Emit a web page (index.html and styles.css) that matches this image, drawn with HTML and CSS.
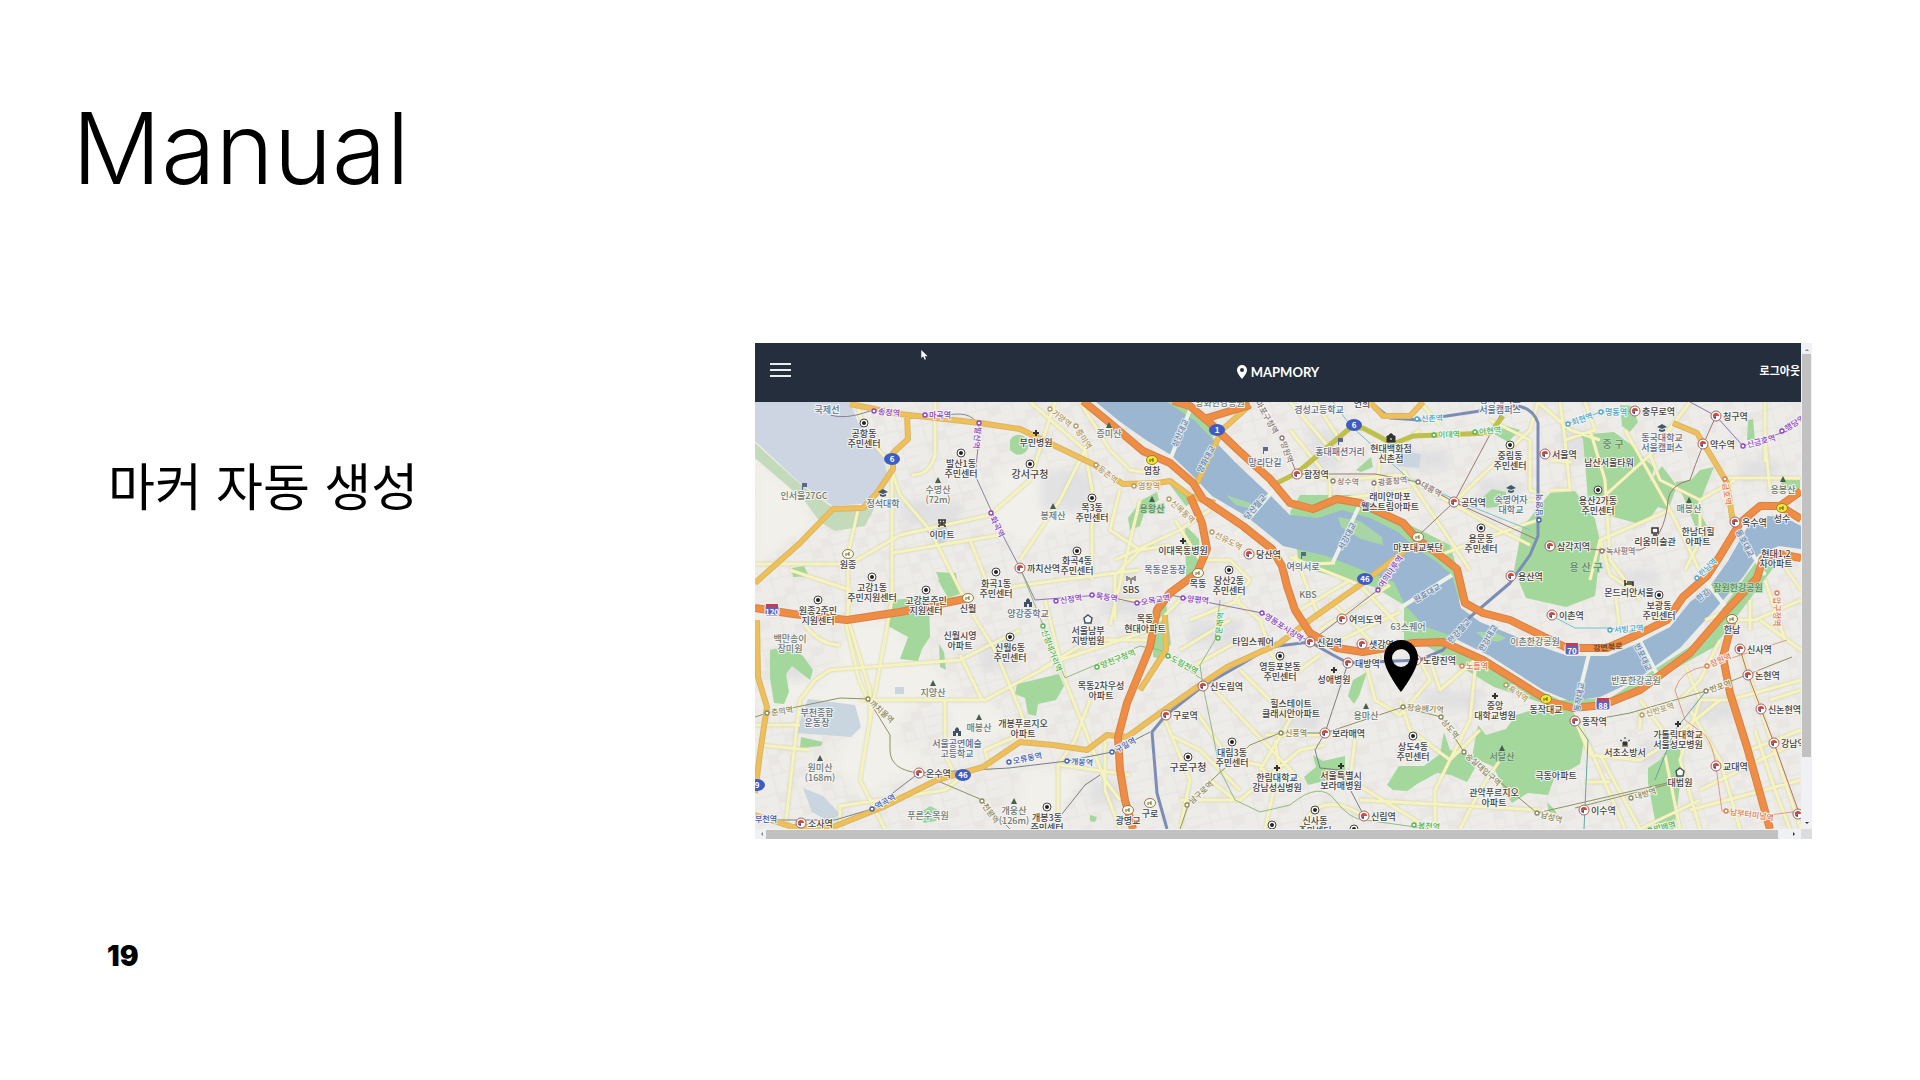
FILE: index.html
```html
<!DOCTYPE html>
<html lang="ko">
<head>
<meta charset="utf-8">
<meta name="viewport" content="width=device-width, initial-scale=1">
<title>Manual</title>
<link rel="stylesheet" href="styles.css">
</head>
<body>
<main class="slide">
  <h1 class="title">Manual</h1>
  <section class="content">
    <p class="caption">마커 자동 생성</p>
    <div class="viewer">
      <header class="topbar">
        <button class="menu" type="button" aria-label="메뉴"><span></span><span></span><span></span></button>
        <a class="brand" href="#"><svg class="brand-pin" viewBox="0 0 10 14" aria-hidden="true"><path fill-rule="evenodd" d="M5 0a5 5 0 0 0-5 5c0 3.500 5 9 5 9s5-5.500 5-9a5 5 0 0 0-5-5zm0 3a2 2 0 1 1 0 4 2 2 0 0 1 0-4z"/></svg>MAPMORY</a>
        <button class="logout" type="button">로그아웃</button>
        <svg class="cursor" viewBox="0 0 8 11" aria-hidden="true"><path d="M1 0v9l2-2 2 4 1-1-1-3h3z"/></svg>
      </header>
      <svg class="map" id="map" viewBox="755 402 1046 427" role="img" aria-label="지도">
        <defs>
          <pattern id="streets" width="46" height="38" patternUnits="userSpaceOnUse" patternTransform="rotate(-14)">
            <path class="street" d="M0 8h46M0 27h46M10 0v38M31 0v38M20 8v19M31 18h15"/>
            <path class="block" d="M11 9h8v9h-8zM32 28h12v8H32zM21 0h9v7h-9z"/>
          </pattern>
          <filter id="soft"><feGaussianBlur stdDeviation="4"/></filter>
          <path id="gold-roads" d="M850 404 900 414 980 423 1020 429 1093 464 1123 484 1157 483 1170 481 1190 496 1215 503M907 414 908 439 893 453V469L877 493 863 508 833 509 800 543 755 583M757 620 758 677 767 707 760 753 755 793M755 815 793 827 833 827 883 807 937 780 983 767 1020 742 1053 745 1087 750 1107 735 1127 737 1160 713 1203 683 1227 667 1280 643 1310 620 1367 580 1412 545M1370 402 1383 416H1410L1423 402M1250 405 1222 430 1197 483M1673 423 1697 433 1713 459 1727 483 1733 523M1165 615 1166 650 1140 690"/>
          <path id="highways" d="M1083 401 1110 423 1143 451 1170 463 1193 483 1203 499 1243 526 1272 549 1282 566 1287 586 1295 610 1310 633 1337 648 1363 652 1413 643 1443 642 1483 660 1520 683 1550 702 1573 708 1603 705 1640 690 1690 653 1727 610 1757 578 1763 559 1780 554 1801 558M1173 401 1190 406 1210 423 1237 449 1270 479 1290 503 1313 509 1337 499 1360 503 1403 523 1417 539 1437 553 1457 569 1465 603 1483 613 1510 620 1567 648 1607 648 1637 635 1667 620 1683 597 1707 576 1720 556 1740 523 1760 506 1780 506 1801 519M1780 506 1801 491M1204 419 1250 405M1190 496 1202 523 1207 549 1197 573 1170 593 1157 610 1150 647 1127 703 1118 737 1120 770 1125 800 1133 829M755 608 793 614 847 620 900 612 965 599M1732 622 1723 657 1730 693 1747 747 1770 829"/>
          <symbol id="i-dot" viewBox="-6 -6 12 12"><circle r="4" fill="#fff" stroke="#444"/><circle r="2" fill="#222"/></symbol>
          <symbol id="i-tri" viewBox="-6 -6 12 12"><path d="M0-3 3 3h-6z" fill="#44604d"/></symbol>
          <symbol id="i-cross" viewBox="-6 -6 12 12"><path d="M-3 0h6M0-3v6" stroke="#333" stroke-width="2"/></symbol>
          <symbol id="i-stop" viewBox="-6 -6 12 12"><circle r="2" fill="#fff" stroke="currentColor" stroke-width="1.300"/></symbol>
          <symbol id="i-rail" viewBox="-6 -6 12 12"><circle r="5" fill="#fff" stroke="#a6625f"/><path d="M-3 1a3 3 0 0 1 3-4v3z" fill="#cb4a38"/><path d="M-3 1a3 3 0 0 0 3 2v-3z" fill="#3c4fa0"/><path d="M0-3a3 3 0 0 1 3 3l-3 0z" fill="#cb4a38"/></symbol>
          <symbol id="i-ic" viewBox="-6 -6 12 12"><ellipse rx="5.500" ry="4.500" fill="#fffde8" stroke="#877b55"/><path d="M-2-1v3M2-1H0v2h2" stroke="#6a623d" fill="none"/></symbol>
          <symbol id="i-icy" viewBox="-6 -6 12 12"><ellipse rx="5.500" ry="4.500" fill="#f4e738" stroke="#91882c"/><path d="M-2-1v3M2-1H0v2h2" stroke="#5c581d" fill="none"/></symbol>
          <symbol id="i-cap" viewBox="-6 -6 12 12"><path d="M-5-1 0-4l5 3-5 2zM-3 1l3 1 3-1v2l-3 1-3-1z" fill="#405a6b"/></symbol>
          <symbol id="i-flag" viewBox="-6 -6 12 12"><path d="M-2-3h5v4h-4v3h-1z" fill="#5b6791"/></symbol>
          <symbol id="i-house" viewBox="-6 -6 12 12"><path d="M-4 4v-5h2v-2l2-2 2 2v2h2v5H1V1h-2v3z" fill="#3f5265"/></symbol>
          <symbol id="i-shop" viewBox="-6 -6 12 12"><path d="M-4-3h8M-3-3v3h6v-3M-3 2h6M-3 4v-2M3 4v-2M0-3v5" fill="none" stroke="#3c3431" stroke-width="1.500"/></symbol>
          <symbol id="i-bag" viewBox="-6 -6 12 12"><path d="M-4-2h8v6h-8zM-2-2c0-3 4-3 4 0" fill="#333" stroke="#333"/><path d="M-1 1h2" stroke="#fff"/></symbol>
          <symbol id="i-pent" viewBox="-6 -6 12 12"><path d="M0-4 4-1 3 4h-6l-1-5z" fill="#fff" stroke="#465364" stroke-width="1.500"/></symbol>
          <symbol id="i-mast" viewBox="-6 -6 12 12"><path d="M0-2v6M-2-3v3M2-3v3M-4-4v5M4-4v5" stroke="#333"/></symbol>
          <symbol id="i-museum" viewBox="-6 -6 12 12"><path d="M-3-3h6v5h-6zM-2 4h4" fill="#fff" stroke="#333" stroke-width="1.500"/></symbol>
          <symbol id="i-bed" viewBox="-6 -6 12 12"><path d="M-4-3v6M-4 1h8v2M-2-1h6v2" stroke="#333" stroke-width="1.500" fill="none"/></symbol>
          <symbol id="i-fire" viewBox="-6 -6 12 12"><path d="M-3 4h6M-2 3v-3h4v3zM0-5v2M-5-2l2 1M5-2l-2 1" stroke="#333" fill="#333"/></symbol>
        </defs>
        <rect class="land" x="755" y="402" width="1046" height="427"/>
        <rect x="755" y="402" width="1046" height="427" fill="url(#streets)"/>
        <path class="meadow" filter="url(#soft)" d="M755 688 770 700 790 680 815 688 840 660 850 620 890 625 925 660 960 690 915 700 890 740 935 760 900 775 860 800 850 780 830 765 860 720 810 700 760 705zM1000 470l60-5 10 60-50 20-30-30zM755 458l50 46 10 20-60 40zM1020 770l60 0-20 40-40 15zM940 700h50l20 30-50 20z"/>
        <g class="haze" filter="url(#soft)">
          <path d="M900 500h60v25h-60zM1040 470h50v40h-50zM1100 590h40v25h-40zM1190 620h50v25h-50zM1090 780h30v25h-30zM1280 700h40v30h-40zM1390 450h60v20h-60zM1480 480h40v30h-40zM1560 430h30v30h-30zM1740 460h40v20h-40zM1640 740h30v25h-30zM1690 700h50v20h-50zM1420 690h60v20h-60zM980 640h40v30h-40zM770 650h30v30h-30zM1310 430h30v40h-30zM1620 570h40v16h-40z"/>
        </g>
        <path class="pale" d="M855 705l6 22-10 10-55-4 12-34zM803 788l20 8 17 18-10 8-18-10zM925 530l20-5 6 12-10 8zM1395 450l26 4-2 14-22-2zM895 687h9v7h-9z"/>
        <path class="airfield" d="M755 402H850L858 423 880 446 888 476 870 503 833 506 800 483 755 441z"/>
        <path class="lawn" d="M755 443 800 484 833 508 876 505 865 526 835 531 820 522 804 500 755 458z"/>
        <g class="park">
          <path d="M770 650l18-4 15 10 10 14-3 10-18-14-6 8 3 18-5 12-10-1-4-25zM891 600l38-3 1 40-8 12-4 12-18-2 8-22-20-11zM938 580l18-2 4 16-12 4zM801 737l22 5-2 4-21 2zM939 644l5 8 2 18-6-3zM918 814l12-8 10 5-4 10-12 2zM1010 440a10 10 0 1 1 5 14l-5-4zM1142 500l15-8 2 8-14 10-5 16-10 4-2-12zM1170 485l14 3 12 12-10 6zM1185 525l14 14 2 30-15 10zM1017 684l42-10 5 12-8 14-18 4-2 12-8-2-3-16-10-4zM1155 600l10-6 6 50-10 15-8-2zM1090 815l7 2-2 5-5-1zM1353 680l14-8-8 24-5 8-6-8z"/>
          <path d="M936 572l20 1 2 14-15 2zM792 568l12-2 5 10-16 1zM1356 470l15-13 2 10-12 5zM1313 755l10 6 22-5 0 20-37 9-4-8 12-10zM1387 785l12-19 25 0 16-12 4-22 6 18 25 7 0 11-8 14-16-7-14-2-20 11-10 7-14-1zM1478 725l8 10 20-6 10-14 30-9 26 4 13 24-5 30-26 15-6 16-20-2-16 10-8-12-10-24-22-10z"/>
          <path d="M1580 435l34-3 16 12 24 24-4 14 12-16 15 20-9 24-10-3-6 8-12 9-30-8-9-20-13 3-5-60zM1550 493l25-2 20 28 6 27-6 50-29 11-40-9-12-28 8-42zM1620 405l12 1 6 16-8 10-8-6zM1748 420l5-1 2 22-8-1zM1700 470l14-3-9 22-7 20 13 25-8 12-20-50-8-14 16-2zM1783 480l17 0 0 8-25 6zM1670 745l10 5 2 20-8 60-18-5-8-42 0-15 12-8zM1547 802l8 8 2 4-8-2zM1480 500l12-11 14 3 0 14-20 2zM1494 434l12-8 14 4-12 12z"/>
        </g>
        <path class="park" d="M1135 402h55l20 24 4 14-30-18zM1300 495h50l100 50 12 40-10 60-48 0 0-40-30-18-74-20-10-55zM1400 630l40-2 30 30 90 42 50-2 90-58 68-95 6 22-60 80-100 56-60 4-60-20z"/>
        <path class="river" d="M1096 402H1167L1195 421 1237 464 1272 497 1290 515 1318 518 1342 510 1370 518 1398 532 1417 549 1437 562 1452 575 1461 608 1480 622 1545 648 1568 656 1608 656 1639 643 1670 627 1690 602 1708 589 1728 561 1748 526 1768 516 1784 517 1801 526V549L1779 546 1759 554 1743 577 1717 607 1680 648 1636 680 1600 697 1570 701 1543 690 1490 656 1446 634 1424 626 1405 605 1394 582 1362 570 1327 556 1283 546 1246 516 1212 496 1194 477 1171 455 1146 440 1119 421z"/>
        <path class="island" d="M1226 495l24 8 10 8-24-6zM1338 517l22 4 22 16 1 8-22-6-20-12zM1476 632l18 0 12 6-8 4-14-3z"/>
        <g class="minor">
          <path d="M858 402q2 30 30 58L900 495 930 530 950 570 970 610 995 650 1020 710 1030 740M892 460V600L870 720 860 780 885 829M755 564H850L900 535 990 515 1030 480 1055 402M848 554V620L870 690V720M848 554 858 510M892 553 1000 535M790 570 850 590 847 620M935 402V455Q930 475 912 475M970 540 990 590 1060 580 1140 570M755 725h45M760 745l50 5M785 829 800 700 815 680 830 670 960 660 1020 630M860 700h125L1060 660 1150 630 1180 600M960 655l22 45M945 700v55l10 20M840 829V806L945 790 970 770M990 770 985 750 1020 735M845 620l14 60 9 20M805 625q15 20 35 20M1030 402 1085 450 1092 490V580M1090 440 1060 500 1020 560M1080 402 1110 450 1130 470 1160 475M1120 489 1110 530 1140 550 1170 545M1140 550 1115 575V620M1110 625 1140 500M1120 600H1160M1045 600 1065 680 1105 780 1120 800M1058 829V765L1075 740 1090 700M1040 670 1090 640 1150 640M1115 560 1180 530 1210 510M1175 520 1200 560 1230 560 1250 580 1235 600 1260 620 1270 650"/>
          <path d="M1105 740v50l15 39M1060 765 1130 775M1165 720 1190 780 1180 829M1170 735 1200 750 1240 790M1195 710 1230 760 1260 765 1275 785 1265 829M1215 690 1300 780M1240 670 1290 720 1260 770M1180 800 1240 800 1300 750 1325 745M1265 735h70M1260 640 1280 665 1300 670 1320 655M1275 740 1280 775M1210 780 1235 800M1240 600 1190 620M1240 640 1195 665M1180 650 1230 620M1290 557 1360 585 1403 630M1290 565 1335 563M1300 610 1350 580M1320 630 1390 585M1330 600 1370 640 1380 660M1295 555 1320 620M1340 640 1400 612M1290 402 1340 460M1315 402 1340 440M1290 430 1330 480V500L1410 490M1375 500 1380 460 1420 430M1300 475 1340 480 1400 475 1450 502 1490 525 1530 545M1403 470 1470 570M1454 502 1530 430 1538 402M1420 402 1440 425M1440 555 1480 540 1538 520M1490 420 1530 440 1530 490 1545 495M1500 500h40M1538 402 1570 430 1600 440M1560 402 1565 440 1595 430 1585 402M1550 490l20 0-5-50M1590 430 1605 480 1610 560 1640 600M1550 460l22 2M1600 500 1650 455 1690 402M1625 430 1670 510 1685 540 1700 572M1670 510 1600 540 1590 580M1600 540l10 35 30 20M1650 455 1660 480 1700 500 1735 480M1700 500v40l-15 30"/>
          <path d="M1725 478h75M1765 402v60M1770 490 1765 440M1365 660 1375 700 1400 715 1430 680 1420 660M1400 700 1410 730 1450 760 1480 730M1430 660 1440 690 1475 660M1355 740 1350 780 1430 829M1360 800 1540 810M1435 829 1435 790 1470 720 1475 670M1460 829 1480 790 1500 760M1300 829q20-40 60-15M1575 720 1590 755 1640 760 1690 730M1580 725 1625 829M1600 755 1640 829M1585 782h25M1685 665 1700 700 1680 760 1700 829M1720 640 1700 680 1680 700M1640 700 1670 740 1720 700M1700 700 1730 700 1801 680M1735 620h20l46-20M1750 600v30M1760 620 1801 650M1690 710 1720 760 1740 829M1700 790 1801 740M1690 810 1801 780M1755 730l20 60 15 39M1740 649 1801 829M1770 700l31-10M1750 750l51-20M1665 755 1680 829M1640 829 1700 800M1640 710v20M1780 560 1801 590M1620 630l-5-40M1705 620 1730 610M1765 580l20 60"/>
        </g>
        <g class="rails">
          <path stroke="#8b829d" d="M830 415q15 5 40-4M948 415Q975 410 980 430L975 475 1000 530 1020 568 1035 600"/>
          <path stroke="#92ba87" d="M1020 568 1045 630 1065 678 1140 646 1160 650 1203 680M1203 686 1210 720 1220 770 1235 800 1260 812 1290 805Q1320 780 1335 800 1350 820 1365 820L1430 829M1203 686 1200 665 1215 640 1220 600"/>
          <path stroke="#8c75b0" d="M1035 600 1100 595 1137 603 1170 595 1262 613 1310 642 1378 590 1395 565M1690 402 1716 416 1743 446 1790 430"/>
          <path stroke="#9b7975" d="M1297 474H1375L1418 482 1454 502 1538 540M1417 537 1454 502 1503 410M1282 438 1297 474M1545 546 1602 550H1640Q1665 540 1668 500 1670 485 1690 480 1700 450 1716 416"/>
          <path stroke="#75c2cf" d="M1333 402 1350 425 1410 480 1480 510 1530 530M1567 424 1601 412 1635 411M1550 615 1575 628H1610L1640 635"/>
          <path stroke="#8f9262" d="M755 717 767 713 840 698 868 699 890 735V750Q890 770 919 773L980 799 1010 829M1180 829 1190 800 1250 745 1280 733H1325L1403 707 1441 717 1464 752 1537 813 1680 780M1575 723 1630 713 1706 691 1792 657M1575 808 1685 780"/>
          <path stroke="#df9b88" d="M1675 690q5-20 32-24l80-26M1675 690l10 30 20 15q8 10 11 31l6 45 40 5 38-5"/>
          <path stroke="#b4706b" d="M1740 649 1748 675 1774 743 1798 810"/>
          <path stroke="#67a4a0" d="M1575 721 1588 740 1584 829M1706 691 1675 730 1655 780"/>
          <path stroke="#7a7f86" d="M759 820H835L872 809 919 773 1009 768 1067 761 1112 752 1150 732M1325 733 1348 663M1325 733 1315 750 1320 768 1340 770 1364 816M1050 829 1085 785 1100 775"/>
        </g>
        <path class="trunk-rail" d="M1167 829 1157 793 1152 732 1166 715 1203 686 1240 665 1270 647 1310 642 1333 655 1348 663 1420 660 1443 650 1470 617 1510 583 1530 555 1538 536V423Q1530 400 1500 408L1420 420 1390 418 1370 402"/>
        <use class="casing" href="#gold-roads"/>
        <use class="gold" href="#gold-roads"/>
        <path class="olive" d="M1277 483 1297 473 1350 428 1363 428 1393 444 1413 436 1490 433 1503 416"/>
        <path class="bridge" d="M1190 410 1166 470M1277 486 1235 535M1362 500 1333 562M1452 575 1400 608M1498 618 1478 655M1590 650 1575 710M1637 635 1660 680M1705 580 1725 606M1735 525 1765 575"/>
        <use class="highway-edge" href="#highways"/>
        <use class="highway" href="#highways"/>
        <g id="labels"></g>
        <path class="marker" fill-rule="evenodd" d="M1401 640c-10 0-17 8-17 18 0 12 17 34 17 34s17-22 17-34c0-10-7-18-17-18zm0 9a9 9 0 1 1 0 18 9 9 0 0 1 0-18z"/>
      </svg>
      <div class="scroll scroll-y" aria-hidden="true"><span class="arrow up"></span><span class="thumb"></span><span class="arrow down"></span></div>
      <div class="scroll scroll-x" aria-hidden="true"><span class="arrow left"></span><span class="thumb"></span><span class="arrow right"></span></div>
      <div class="corner"></div>
    </div>
  </section>
  <footer class="page-number">19</footer>
</main>
<script src="map.js"></script>
</body>
</html>
```
FILE: styles.css
```css
* { box-sizing: border-box; }
body {
  margin: 0;
  background: #fff;
  color: #000;
  font-family: "Noto Sans CJK KR", sans-serif;
}
button { padding: 0; border: 0; background: none; color: inherit; font: inherit; }
.slide { min-height: 100vh; padding: 68px 108px 0 110px; }
.title {
  margin: 0 0 115px -38px;
  font: 300 99px/160px Inter, sans-serif;
}
.content { display: grid; grid-template-columns: 645fr 1057fr; align-items: start; }
.caption { margin: 0 0 0 -2px; padding-top: 101px; font-size: 51px; line-height: 80px; font-weight: 400; }
.page-number {
  margin-left: -3px;
  padding-top: 97px;
  font: 900 28px/40px Inter, sans-serif;
}
.viewer { display: grid; grid-template-columns: 1fr 11px; grid-template-rows: 59px auto 10px; min-width: 0; }
.topbar {
  position: relative;
  display: grid;
  grid-template-columns: 1fr auto 1fr;
  align-items: center;
  padding: 0 1px 6px;
  background: #242e3d;
  color: #fff;
}
.menu { display: grid; gap: 4px; width: 21px; margin-left: 14px; }
.menu span { height: 2px; background: #e8edf2; }
.brand {
  display: flex;
  align-items: center;
  gap: 4px;
  margin-top: 4px;
  color: #fff;
  font: 700 13px/16px Lato, sans-serif;
  text-decoration: none;
}
.brand-pin { width: 10px; height: 14px; fill: #fff; }
.logout { justify-self: end; font-size: 11px; line-height: 16px; font-weight: 700; }
.cursor { position: absolute; left: 165px; top: 7px; width: 8px; height: 10px; fill: #fff; }
.map { display: block; width: 100%; height: auto; overflow: hidden; }
.scroll { display: flex; align-items: center; background: #f0f1f4; }
.scroll-y { grid-column: 2; grid-row: 1 / 3; flex-direction: column; }
.scroll-x { grid-column: 1; grid-row: 3; }
.thumb { background: #c1c1c1; }
.scroll-y .thumb { flex: 0 0 83%; width: 9px; }
.scroll-x .thumb { flex: 1; height: 9px; }
.arrow { display: grid; place-items: center; flex: 0 0 11px; }
.arrow::before { content: ""; border: 2px solid transparent; }
.up::before { border-bottom-color: #888; }
.down { margin-top: auto; }
.down::before { border-top-color: #333; }
.left::before { border-right-color: #888; }
.right { flex-basis: 23px; justify-content: end; padding-right: 4px; }
.right::before { border-left-color: #333; }
.corner { background: #dcdcdc; }

.land { fill: #eeece8; }
.street { fill: none; stroke: #e6e4e0; stroke-width: 1; }
.block { fill: #e9e6e3; }
.haze { fill: #dcdde1; opacity: .7; }
.pale { fill: #c9d5df; }
.meadow { fill: #f1f0ea; }
.airfield { fill: #ccd5e1; }
.lawn { fill: #c3dbba; }
.park { fill: #a4d79c; }
.river { fill: #9ab6d1; }
.island { fill: #a9d5a6; }
.minor { fill: none; stroke: #f5f3bf; stroke-width: 3; stroke-linejoin: round; filter: drop-shadow(0 0 1px #cfcc9c); }
.rails { fill: none; stroke-width: 1; }
.trunk-rail { fill: none; stroke: #7c8db5; stroke-width: 3; stroke-linejoin: round; }
.casing, .gold, .highway, .highway-edge { fill: none; stroke-linejoin: round; }
.casing { stroke: #dbb468; stroke-width: 6; }
.gold { stroke: #edc05a; stroke-width: 4; }
.olive { fill: none; stroke: #bfc04b; stroke-width: 5; stroke-linejoin: round; }
.bridge { fill: none; stroke: #eef1e8; stroke-width: 4; }
.highway-edge { stroke: #d38349; stroke-width: 8; }
.highway { stroke: #ee8d43; stroke-width: 6; }
.marker { fill: #000; }

.label {
  fill: #444;
  font-size: 9px;
  font-weight: 500;
  text-anchor: middle;
  paint-order: stroke;
  stroke: #f6f5f2;
  stroke-width: 2px;
  stroke-linejoin: round;
}
.start { text-anchor: start; }
.big { font-size: 10px; }
.nature { fill: #6d7a72; }
.blue-grey { fill: #5e6f8b; }
.park-name { fill: #5f8a66; stroke: #b4dcae; }
.river-name { fill: #6985a5; stroke: #dde6ed; font-size: 8px; }
.line { font-size: 8px; }
.purple { fill: #8a3fc4; color: #8a3fc4; }
.cyan { fill: #49a6cb; color: #49a6cb; }
.green { fill: #4fb54d; color: #4fb54d; }
.olive-line { fill: #8b8858; color: #8b8858; }
.brown { fill: #8d7774; color: #8d7774; }
.tan { fill: #b49a61; color: #b49a61; }
.orange { fill: #e07b50; color: #e07b50; }
.navy { fill: #3b5cb5; color: #3b5cb5; }
.badge { fill: #3f5bc4; }
.shield { fill: #5c63bd; stroke: #fff; }
.shield-top { fill: #c83c4c; }
.badge-text { fill: #fff; font-size: 8px; font-weight: 700; text-anchor: middle; }
.road-name { fill: #7b4a25; }
```
FILE: map.js
```js
const NS = 'http://www.w3.org/2000/svg';
const layer = document.getElementById('labels');

function add(name, attrs, text) {
  const el = document.createElementNS(NS, name);
  for (const key in attrs) el.setAttribute(key, attrs[key]);
  if (text) el.textContent = text;
  layer.append(el);
}
function icon(id, x, y, cls = '') {
  add('use', { href: '#i-' + id, x: x - 6, y: y - 6, width: 12, height: 12, class: cls });
}

// Subway stops: name, circle x, circle y, text angle, line colour
const stops = [
  ['송정역', 874, 411, 5, 'purple'], ['마곡역', 925, 415, 0, 'purple'], ['발산역', 979, 423, 96, 'purple'],
  ['화곡역', 991, 513, 64, 'purple'], ['가양역', 1050, 409, 38, 'tan'], ['증미역', 1076, 426, 58, 'tan'],
  ['등촌역', 1096, 465, 38, 'tan'], ['염창역', 1134, 486, 0, 'tan'], ['신목동역', 1169, 499, 42, 'tan'],
  ['선유도역', 1212, 532, 28, 'tan'], ['망원역', 1282, 438, 70, 'brown'], ['신촌역', 1417, 419, -3, 'cyan'],
  ['이대역', 1434, 435, -2, 'green'], ['아현역', 1475, 432, -5, 'green'], ['상수역', 1333, 481, 2, 'brown'],
  ['광흥창역', 1374, 483, -6, 'brown'], ['대흥역', 1418, 482, 28, 'brown'], ['남영역', 1539, 520, -89, 'navy'],
  ['회현역', 1568, 424, -20, 'cyan'], ['명동역', 1601, 412, 0, 'cyan'], ['신금호역', 1743, 446, -15, 'purple'],
  ['행당역', 1782, 431, -32, 'purple'], ['금호역', 1725, 479, 82, 'orange'], ['녹사평역', 1602, 551, 0, 'brown'],
  ['한남역', 1697, 578, -45, 'cyan'], ['춘의역', 767, 713, -8, 'olive-line'], ['까치울역', 868, 699, 42, 'olive-line'],
  ['오류동역', 1009, 762, -12, 'navy'], ['개봉역', 1067, 761, 4, 'navy'], ['구일역', 1112, 752, -28, 'navy'],
  ['역곡역', 872, 809, -30, 'navy'], ['천왕역', 982, 801, 54, 'olive-line'], ['신정역', 1056, 601, -8, 'purple'],
  ['목동역', 1092, 595, 8, 'purple'], ['오목교역', 1137, 603, -10, 'purple'], ['양평역', 1183, 598, 6, 'purple'],
  ['영등포시장역', 1262, 613, 33, 'purple'], ['신정네거리역', 1043, 626, 70, 'green'], ['양천구청역', 1097, 667, -22, 'green'],
  ['도림천역', 1168, 656, 28, 'green'], ['문래역', 1218, 638, -84, 'green'], ['남구로역', 1187, 805, -42, 'olive-line'],
  ['여의나루역', 1378, 590, -56, 'purple'], ['노들역', 1462, 666, 0, 'orange'], ['흑석역', 1506, 685, 35, 'tan'],
  ['장승배기역', 1403, 707, 4, 'olive-line'], ['상도역', 1441, 717, 52, 'olive-line'], ['숭실대입구역', 1464, 752, 42, 'olive-line'],
  ['신풍역', 1281, 733, 0, 'olive-line'], ['봉천역', 1414, 825, 4, 'green'], ['남성역', 1537, 813, 16, 'olive-line'],
  ['서빙고역', 1610, 630, -4, 'cyan'], ['압구정역', 1777, 593, 90, 'orange'], ['잠원역', 1707, 666, -24, 'orange'],
  ['반포역', 1706, 691, -18, 'olive-line'], ['신반포역', 1642, 715, -17, 'tan'], ['내방역', 1631, 798, -17, 'olive-line'],
  ['남부터미널역', 1726, 811, 8, 'orange'], ['방배역', 1650, 830, -14, 'green']
];
for (const [name, x, y, angle, cls] of stops) {
  icon('stop', x, y, cls);
  add('text', { x: x + 4, y: y + 3, class: 'label line start ' + cls, transform: `rotate(${angle} ${x} ${y})` }, name);
}

// Transfer stations: name, x, y
const stations = [
  ['까치산역', 1020, 568], ['당산역', 1249, 554], ['합정역', 1297, 474], ['공덕역', 1454, 502], ['용산역', 1511, 576],
  ['서울역', 1545, 454], ['충무로역', 1635, 411], ['청구역', 1716, 416], ['약수역', 1703, 444], ['옥수역', 1735, 522],
  ['삼각지역', 1550, 546], ['온수역', 919, 773], ['소사역', 801, 823], ['신도림역', 1203, 686], ['구로역', 1166, 715],
  ['여의도역', 1342, 619], ['신길역', 1310, 642], ['샛강역', 1362, 644], ['대방역', 1348, 663], ['노량진역', 1416, 660],
  ['보라매역', 1325, 733], ['신림역', 1364, 816], ['이촌역', 1552, 615], ['신사역', 1740, 649], ['논현역', 1748, 675],
  ['신논현역', 1761, 709], ['강남역', 1774, 743], ['동작역', 1575, 721], ['교대역', 1716, 766], ['이수역', 1584, 810]
];
for (const [name, x, y] of stations) {
  icon('rail', x, y);
  add('text', { x: x + 7, y: y + 4, class: 'label start' }, name);
}
icon('rail', 1798, 814);

// Places: icon, lines, x, icon y, first baseline, extra class
const places = [
  ['dot', '공항동|주민센터', 864, 423, 437], ['dot', '발산1동|주민센터', 961, 453, 467], ['flag', '인서울27GC', 804, 486, 499, 'nature'],
  ['tri', '수명산|(72m)', 938, 480, 493, 'nature'], ['cap', '정석대학', 883, 493, 507, 'blue-grey'], ['shop', '이마트', 942, 523, 538],
  ['ic', '원종', 848, 554, 568], ['dot', '고강1동|주민지원센터', 872, 577, 591], ['dot', '화곡1동|주민센터', 996, 572, 587],
  ['cross', '부민병원', 1036, 433, 446], ['dot', '강서구청', 1030, 464, 478, 'big'], ['tri', '증미산', 1109, 425, 437, 'nature'],
  ['icy', '염창', 1152, 460, 474], ['tri', '용왕산', 1152, 499, 512, 'park-name'], ['tri', '봉제산', 1053, 506, 519, 'nature'],
  ['dot', '목3동|주민센터', 1092, 498, 511], ['dot', '화곡4동|주민센터', 1077, 551, 564], ['cross', '이대목동병원', 1183, 541, 554],
  ['', '목동운동장', 1165, 0, 573, 'blue-grey'], ['ic', '목동', 1198, 573, 587], ['dot', '당산2동|주민센터', 1229, 570, 584],
  ['mast', 'SBS', 1131, 580, 593], ['flag', '망리단길', 1265, 450, 466, 'blue-grey'], ['', '경성고등학교', 1319, 0, 413, 'blue-grey'],
  ['', '연희', 1362, 0, 407], ['', '국제선', 827, 0, 413, 'blue-grey'], ['', '양화한강공원', 1220, 0, 406, 'nature'],
  ['bag', '현대백화점|신촌점', 1391, 438, 452], ['flag', '홍대패션거리', 1340, 441, 455, 'blue-grey'],
  ['', '래미안마포|웰스트림아파트', 1390, 0, 500], ['dot', '중림동|주민센터', 1510, 445, 459], ['', '경기대학교|서울캠퍼스', 1500, 0, 403, 'blue-grey'],
  ['cap', '숙명여자|대학교', 1511, 489, 503, 'blue-grey'], ['dot', '용문동|주민센터', 1481, 528, 542], ['ic', '마포대교북단', 1418, 537, 551],
  ['flag', '여의서로', 1303, 555, 570, 'blue-grey'], ['cap', '동국대학교|서울캠퍼스', 1662, 428, 441, 'blue-grey'],
  ['', '중 구', 1613, 0, 448, 'park-name big'], ['', '남산서울타워', 1609, 0, 466], ['dot', '용산2가동|주민센터', 1598, 490, 504],
  ['tri', '매봉산', 1689, 500, 512, 'nature'], ['tri', '응봉산', 1783, 479, 493, 'nature'], ['icy', '성수', 1782, 508, 522],
  ['museum', '리움미술관', 1655, 531, 545], ['', '한남더힐|아파트', 1698, 0, 535], ['', '용 산 구', 1586, 0, 571, 'park-name big'],
  ['', '현대1,2|차아파트', 1776, 0, 557], ['', '잠원한강공원', 1738, 0, 591, 'park-name'],
  ['dot', '원종2주민|지원센터', 818, 600, 614], ['dot', '고강본주민|지원센터', 926, 590, 604], ['ic', '신월', 968, 598, 612],
  ['', '백만송이|장미원', 790, 0, 642, 'nature'], ['house', '양강중학교', 1028, 603, 617, 'blue-grey'], ['', '신월시영|아파트', 960, 0, 639],
  ['dot', '신월6동|주민센터', 1010, 637, 651], ['tri', '지양산', 933, 683, 696, 'nature'], ['', '부천종합|운동장', 817, 0, 716, 'blue-grey'],
  ['tri', '매봉산', 979, 717, 731, 'nature'], ['', '개봉푸르지오|아파트', 1023, 0, 727], ['house', '서울공연예술|고등학교', 957, 732, 747, 'blue-grey'],
  ['tri', '원미산|(168m)', 820, 758, 771, 'nature'], ['', '푸른수목원', 928, 0, 819, 'nature'], ['tri', '개웅산|(126m)', 1014, 801, 814, 'nature'],
  ['dot', '개봉3동|주민센터', 1047, 807, 821], ['pent', '서울남부|지방법원', 1088, 619, 634], ['', '목동|현대아파트', 1145, 0, 622],
  ['', '타임스퀘어', 1253, 0, 645], ['', '목동2차우성|아파트', 1101, 0, 689], ['dot', '영등포본동|주민센터', 1280, 656, 670],
  ['dot', '구로구청', 1188, 757, 771, 'big'], ['dot', '대림3동|주민센터', 1232, 742, 756], ['', '힐스테이트|클래시안아파트', 1291, 0, 707],
  ['ic', '광명교', 1128, 810, 824], ['ic', '구로', 1150, 803, 817], ['dot', '신사동|주민센터', 1315, 810, 824],
  ['cross', '한림대학교|강남성심병원', 1277, 768, 781], ['', 'KBS', 1308, 0, 598, 'nature'], ['', '63스퀘어', 1408, 0, 630, 'nature'],
  ['cross', '성애병원', 1334, 670, 683], ['cross', '중앙|대학교병원', 1495, 696, 709], ['icy', '동작대교', 1546, 699, 713],
  ['tri', '용마산', 1366, 706, 719, 'nature'], ['dot', '상도4동|주민센터', 1413, 736, 750], ['tri', '서달산', 1502, 748, 760, 'park-name'],
  ['cross', '서울특별시|보라매병원', 1341, 766, 779], ['', '관악푸르지오|아파트', 1494, 0, 796], ['', '극동아파트', 1556, 0, 779],
  ['', '이촌한강공원', 1535, 0, 645, 'nature'], ['bed', '몬드리안서울', 1629, 583, 596], ['dot', '보광동|주민센터', 1659, 595, 609],
  ['', '반포한강공원', 1636, 0, 684, 'nature'], ['ic', '한남', 1732, 619, 633], ['cross', '가톨릭대학교|서울성모병원', 1678, 724, 738],
  ['fire', '서초소방서', 1625, 742, 756], ['pent', '대법원', 1680, 772, 786], ['dot', '', 1272, 825, 840], ['dot', '', 1354, 829, 840]
];
for (const [id, lines, x, iconY, y, cls = ''] of places) {
  if (id) icon(id, x, iconY);
  if (!lines) continue;
  lines.split('|').forEach((line, i) => add('text', { x, y: y + i * 10, class: 'label ' + cls }, line));
}

// Names set along bridges and roads: name, centre x, centre y, angle
const along = [
  ['성산대교', 1180, 433, -66], ['양화대교', 1206, 459, -62], ['당산철교', 1255, 507, -50], ['서강대교', 1347, 536, -62],
  ['원효대교', 1427, 593, -30], ['한강철교', 1459, 631, -48], ['한강대교', 1488, 638, -60], ['동작대교', 1579, 697, -80],
  ['반포대교', 1643, 657, 65], ['동호대교', 1745, 543, 62], ['한강', 1703, 595, -40]
];
for (const [name, x, y, angle] of along) {
  add('text', { x, y: y + 3, class: 'label river-name', transform: `rotate(${angle} ${x} ${y})` }, name);
}
add('text', { x: 1267, y: 420, class: 'label line brown', transform: 'rotate(60 1267 417)' }, '마포구청역');
add('text', { x: 755, y: 822, class: 'label line start navy' }, '부천역');
add('text', { x: 1608, y: 650, class: 'badge-text road-name', transform: 'rotate(-5 1608 648)' }, '강변북로');

// Numbered route badges
for (const [num, x, y] of [['6', 892, 459], ['1', 1217, 430], ['6', 1354, 425], ['46', 1365, 579], ['46', 963, 775], ['9', 757, 785]]) {
  add('ellipse', { cx: x, cy: y, rx: 8, ry: 6, class: 'badge' });
  add('text', { x, y: y + 3, class: 'badge-text' }, num);
}
for (const [num, x, y] of [['120', 772, 610], ['70', 1572, 649], ['88', 1603, 704]]) {
  add('rect', { x: x - 7, y: y - 5, width: 14, height: 11, rx: 2, class: 'shield' });
  add('rect', { x: x - 6, y: y - 6, width: 12, height: 3, class: 'shield-top' });
  add('text', { x, y: y + 5, class: 'badge-text' }, num);
}
```
